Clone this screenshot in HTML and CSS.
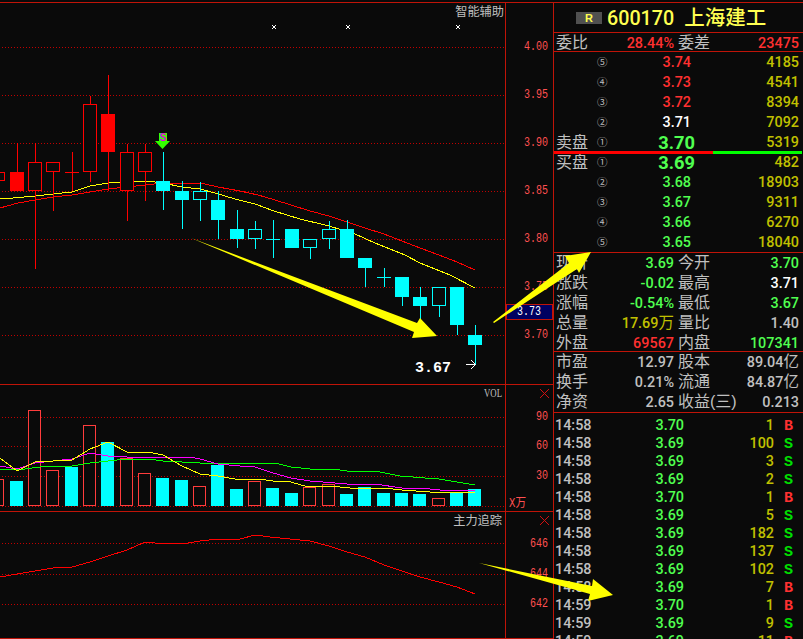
FILE: index.html
```html
<!DOCTYPE html>
<html lang="zh-CN">

<head>
  <meta charset="UTF-8">
  <meta name="viewport" content="width=device-width, initial-scale=1.0">
  <title>600170 上海建工</title>
  <link rel="stylesheet" href="styles.css">
</head>

<body>
  <div class="terminal">
    <div class="charts">
      <svg class="chart" width="553" height="382" viewBox="0 2 553 382">
        <g class="grid">
          <path d="M2 47.5H504M2 95.5H504M2 143.5H504M2 191.5H504M2 239.5H504M2 287.5H504M2 335.5H504" />
        </g>
        <polyline class="line yellow" points="0,199 13,198 35,196 53,194 72,192 90,186 108,183 127,182 145,181 155,182 163,183 182,187 200,189 215,193 235,199 255,204 274,211 300,219 329,226 355,234 375,243 405,255 420,263 450,275 475,288" />
        <polyline class="line red" points="0,208 18,203 35,200 53,197 72,195 90,192 108,189 127,187 145,185 163,183 190,183 205,184 218,187 240,191 258,195 275,200 291,205 310,211 329,216 347,222 365,228 384,234 402,241 420,248 439,255 457,262 475,270" />
        <g id="candles"></g>
        <g class="cross">
          <path d="M272 25L276 29M276 25L272 29M346 25L350 29M350 25L346 29M456 25L460 29M460 25L456 29" />
        </g>
        <rect x="159" y="133" width="8" height="8" fill="#33ff00" />
        <text class="signal" x="163" y="141">S</text>
        <path d="M155 141H170L162.5 149Z" fill="#33ff00" />
        <text class="title" x="504" y="16">智能辅助</text>
        <text class="low" x="415" y="372" textLength="36">3.67</text>
        <path class="pointer" d="M466 364.5H475M471 360L475.5 364.5L471 369" />
        <path class="frame" d="M0 2.5H553M505.5 2V384" />
        <g class="axis">
          <text x="548" y="50" textLength="24" lengthAdjust="spacingAndGlyphs">4.00</text>
          <text x="548" y="98" textLength="24" lengthAdjust="spacingAndGlyphs">3.95</text>
          <text x="548" y="146" textLength="24" lengthAdjust="spacingAndGlyphs">3.90</text>
          <text x="548" y="194" textLength="24" lengthAdjust="spacingAndGlyphs">3.85</text>
          <text x="548" y="242" textLength="24" lengthAdjust="spacingAndGlyphs">3.80</text>
          <text x="548" y="290" textLength="24" lengthAdjust="spacingAndGlyphs">3.75</text>
          <text x="548" y="338" textLength="24" lengthAdjust="spacingAndGlyphs">3.70</text>
        </g>
        <rect class="cursor-box" x="506.5" y="304.5" width="46" height="15" />
        <text class="cursor-price" x="517" y="315" textLength="24" lengthAdjust="spacingAndGlyphs">3.73</text>
      </svg>

      <svg class="chart" width="553" height="127" viewBox="0 384 553 127">
        <g class="grid">
          <path d="M2 417.5H504M2 446.5H504M2 476.5H504M2 506.5H504" />
        </g>
        <g id="volumes"></g>
        <polyline class="line green" points="0,469 25,469 40,467 72,466 90,463 108,461 127,459 148,459 163,461 182,462 200,463 275,463 291,467 310,469 333,469 347,471 375,471 400,476 425,478 439,479 457,482 475,485" />
        <polyline class="line magenta" points="0,466 17,469 35,463 53,461 72,459 90,453 108,456 127,457 190,457 200,459 218,464 240,466 255,467 273,473 291,478 310,481 335,483 347,484 375,484 402,488 420,488 440,490 475,490" />
        <polyline class="line yellow" points="0,458 17,471 35,462 53,461 72,460 90,449 108,442 127,452 148,452 163,455 182,466 200,474 218,476 235,479 258,479 273,481 291,482 308,487 330,486 350,488 384,488 402,490 430,492 457,493 475,492" />
        <path class="frame" d="M0 384.5H553M505.5 384V511" />
        <text class="vol" x="502" y="397" textLength="18" lengthAdjust="spacingAndGlyphs">VOL</text>
        <path class="close" d="M540 389L549 398M549 389L540 398" />
        <g class="axis">
          <text x="548" y="420" textLength="12" lengthAdjust="spacingAndGlyphs">90</text>
          <text x="548" y="449" textLength="12" lengthAdjust="spacingAndGlyphs">60</text>
          <text x="548" y="479" textLength="12" lengthAdjust="spacingAndGlyphs">30</text>
          <text x="526" y="507" textLength="17" lengthAdjust="spacingAndGlyphs">X万</text>
        </g>
      </svg>

      <svg class="chart" width="553" height="128" viewBox="0 511 553 128">
        <g class="grid">
          <path d="M2 543.5H504M2 574.5H504M2 604.5H504" />
        </g>
        <polyline class="line red" points="0,577 17,574 35,571 53,568 72,567 90,562 108,556 127,550 145,542 155,543 182,544 200,541 218,539 240,539 255,535 270,537 290,539 310,541 329,546 347,552 365,557 384,565 402,571 420,577 439,582 457,587 475,594" />
        <path class="frame" d="M0 511.5H553M0 638.5H553M505.5 511V639" />
        <text class="title" x="502" y="525">主力追踪</text>
        <path class="close" d="M540 516L549 525M549 516L540 525" />
        <g class="axis">
          <text x="548" y="547" textLength="18" lengthAdjust="spacingAndGlyphs">646</text>
          <text x="548" y="577" textLength="18" lengthAdjust="spacingAndGlyphs">644</text>
          <text x="548" y="607" textLength="18" lengthAdjust="spacingAndGlyphs">642</text>
        </g>
      </svg>
    </div>

    <div class="quote">
      <div class="stock">
        <span class="badge">R</span>
        <span class="code">600170</span>
        <span class="name">上海建工</span>
      </div>
      <div class="info ratio">
        <div class="row"><span>委比</span><b class="up">28.44%</b><span>委差</span><b class="up">23475</b></div>
      </div>

      <div class="book">
        <div class="level"><span></span><i>⑤</i><b class="up">3.74</b><b class="qty">4185</b></div>
        <div class="level"><span></span><i>④</i><b class="up">3.73</b><b class="qty">4541</b></div>
        <div class="level"><span></span><i>③</i><b class="up">3.72</b><b class="qty">8394</b></div>
        <div class="level"><span></span><i>②</i><b class="flat">3.71</b><b class="qty">7092</b></div>
        <div class="level first"><span>卖盘</span><i>①</i><b class="down">3.70</b><b class="qty">5319</b></div>
        <div class="split"></div>
        <div class="level first"><span>买盘</span><i>①</i><b class="down">3.69</b><b class="qty">482</b></div>
        <div class="level"><span></span><i>②</i><b class="down">3.68</b><b class="qty">18903</b></div>
        <div class="level"><span></span><i>③</i><b class="down">3.67</b><b class="qty">9311</b></div>
        <div class="level"><span></span><i>④</i><b class="down">3.66</b><b class="qty">6270</b></div>
        <div class="level"><span></span><i>⑤</i><b class="down">3.65</b><b class="qty">18040</b></div>
      </div>

      <div class="info today">
        <div class="row"><span>现价</span><b class="down">3.69</b><span>今开</span><b class="down">3.70</b></div>
        <div class="row"><span>涨跌</span><b class="down">-0.02</b><span>最高</span><b class="flat">3.71</b></div>
        <div class="row"><span>涨幅</span><b class="down">-0.54%</b><span>最低</span><b class="down">3.67</b></div>
        <div class="row"><span>总量</span><b class="qty">17.69<em>万</em></b><span>量比</span><b>1.40</b></div>
        <div class="row"><span>外盘</span><b class="up">69567</b><span>内盘</span><b class="down">107341</b></div>
      </div>

      <div class="info basics">
        <div class="row"><span>市盈</span><b>12.97</b><span>股本</span><b>89.04<em>亿</em></b></div>
        <div class="row"><span>换手</span><b>0.21%</b><span>流通</span><b>84.87<em>亿</em></b></div>
        <div class="row"><span>净资</span><b>2.65</b><span>收益(三)</span><b>0.213</b></div>
      </div>

      <div class="ticks" id="ticks"></div>
    </div>

    <svg class="arrows" width="803" height="639">
      <polygon points="191,238 417,323 420,318 437,336 412,338 414,332" />
      <polygon points="493,322 569,263 565,256 591,252 579,273 577,269 494,323" />
      <polygon points="479,563 592,586 593,579 613,595 588,601 590,594" />
    </svg>
  </div>

  <script>
    // x, wick top, body top, body bottom, wick bottom, type
    // r/c = hollow red/cyan, R/C = filled
    const candles = [
      [-10, 172, 172, 181, 181, "r"],
      [10, 143, 172, 191, 191, "R"],
      [28, 143, 162, 191, 269, "r"],
      [46, 162, 162, 172, 211, "r"],
      [65, 152, 172, 173, 191, "R"],
      [83, 96, 104, 172, 182, "r"],
      [101, 75, 114, 152, 191, "R"],
      [120, 144, 152, 191, 221, "r"],
      [138, 144, 152, 172, 201, "r"],
      [156, 152, 181, 191, 210, "C"],
      [175, 181, 191, 200, 229, "C"],
      [193, 182, 191, 200, 221, "c"],
      [211, 191, 200, 220, 239, "C"],
      [230, 210, 229, 239, 248, "C"],
      [248, 221, 229, 239, 249, "c"],
      [266, 220, 239, 240, 258, "C"],
      [285, 229, 229, 248, 248, "C"],
      [303, 239, 239, 248, 259, "c"],
      [322, 221, 229, 239, 249, "c"],
      [340, 220, 229, 258, 258, "C"],
      [358, 258, 258, 268, 287, "C"],
      [377, 268, 277, 278, 287, "C"],
      [395, 277, 277, 297, 306, "C"],
      [413, 287, 297, 306, 320, "C"],
      [432, 287, 287, 306, 317, "c"],
      [450, 287, 287, 325, 335, "C"],
      [468, 325, 335, 345, 365, "C"],
    ];

    // top of each volume bar, in the same order as the candles
    const volumes = [
      [479, "r"], [481, "C"], [410, "r"], [470, "r"], [467, "C"], [425, "r"], [442, "C"],
      [458, "r"], [473, "r"], [478, "C"], [480, "C"], [486, "r"], [465, "C"], [489, "C"],
      [481, "r"], [488, "C"], [493, "C"], [487, "r"], [484, "r"], [494, "C"], [487, "C"],
      [493, "C"], [493, "C"], [494, "C"], [498, "r"], [492, "C"], [489, "C"],
    ];

    const ticks = [
      ["14:58", "3.70", 1, "B"],
      ["14:58", "3.69", 100, "S"],
      ["14:58", "3.69", 3, "S"],
      ["14:58", "3.69", 2, "S"],
      ["14:58", "3.70", 1, "B"],
      ["14:58", "3.69", 5, "S"],
      ["14:58", "3.69", 182, "S"],
      ["14:58", "3.69", 137, "S"],
      ["14:58", "3.69", 102, "S"],
      ["14:58", "3.69", 7, "B"],
      ["14:59", "3.70", 1, "B"],
      ["14:59", "3.69", 9, "S"],
      ["14:59", "3.69", 11, "B"],
    ];

    function bar(x, top, width, bottom, type, red) {
      const color = type.toLowerCase() === "r" ? red : "#00ffff";
      if (type === "R" || type === "C") {
        return `<rect x="${x}" y="${top}" width="${width}" height="${bottom - top}" fill="${color}"/>`;
      }
      return `<rect x="${x + 0.5}" y="${top + 0.5}" width="${width - 1}" height="${bottom - top - 1}" fill="#0a0a0a" stroke="${color}"/>`;
    }

    document.getElementById("candles").innerHTML = candles.map(([x, high, top, bottom, low, type]) => {
      const color = type.toLowerCase() === "r" ? "#ff0000" : "#00ffff";
      return `<rect x="${x + 7}" y="${high}" width="1" height="${low - high}" fill="${color}"/>` +
        bar(x, top, x < 0 ? 15 : 14, bottom, type, "#ff0000");
    }).join("");

    document.getElementById("volumes").innerHTML = volumes.map(([top, type], i) => {
      const x = candles[i][0];
      return bar(x, top, x < 0 ? 14 : 13, 506, type, "#ff3c3c");
    }).join("");

    document.getElementById("ticks").innerHTML = ticks.map(([time, price, qty, side]) =>
      `<div class="tick"><b>${time}</b><b class="down">${price}</b><b class="qty">${qty}</b><b class="side ${side === "B" ? "up" : "sell"}">${side}</b></div>`
    ).join("");
  </script>
</body>

</html>
```
FILE: styles.css
```css
body {
  margin: 0;
  background-color: #0a0a0a;
  color: #c0c0c0;
  font-family: "Liberation Sans", "Noto Sans CJK SC", sans-serif;
  overflow: hidden;
}

.terminal {
  position: relative;
  display: flex;
  width: 803px;
  height: 639px;
  overflow: hidden;
}

/* charts */
.charts {
  display: flex;
  flex-direction: column;
  width: 553px;
  padding-top: 2px;
}

.chart {
  display: block;
}

.grid path {
  stroke: #c00000;
  stroke-dasharray: 1 2;
  shape-rendering: crispEdges;
}

.frame {
  fill: none;
  stroke: #c01408;
  shape-rendering: crispEdges;
}

.line {
  fill: none;
  stroke-width: 1;
  shape-rendering: crispEdges;
}

.yellow {
  stroke: #ffff00;
}

.red {
  stroke: #ff0000;
}

.green {
  stroke: #00ff00;
}

.magenta {
  stroke: #ff00ff;
}

.cross path,
.pointer {
  fill: none;
  stroke: #ffffff;
}

.close {
  stroke: #d01010;
}

.title {
  fill: #c0c0c0;
  font-size: 12.2px;
  font-family: "Noto Sans CJK SC", sans-serif;
  text-anchor: end;
}

.vol {
  fill: #c0c0c0;
  font: 12px "Liberation Serif", serif;
  text-anchor: end;
}

.signal {
  fill: #e000e0;
  font: bold 10px "Liberation Sans", sans-serif;
  text-anchor: middle;
}

.low {
  fill: #ffffff;
  font: bold 15px "Liberation Mono", monospace;
}

.axis text {
  fill: #ff5050;
  font: 12px "Liberation Mono", "Noto Sans CJK SC", monospace;
  text-anchor: end;
}

.cursor-box {
  fill: #000060;
  stroke: #c01408;
}

.cursor-price {
  fill: #ffffff;
  font: 12px "Liberation Mono", monospace;
}

/* quote panel */
.quote {
  box-sizing: border-box;
  width: 250px;
  height: 637px;
  margin-top: 2px;
  border-top: 1px solid #c01408;
  border-left: 1px solid #c01408;
  overflow: hidden;
}

.quote b {
  font-family: Roboto, "Noto Sans CJK SC", sans-serif;
  font-size: 14.4px;
  font-weight: 500;
}

.stock {
  display: flex;
  align-items: center;
  height: 29px;
  padding-left: 22px;
  color: #ffff50;
  font-size: 20px;
  white-space: nowrap;
}

.badge {
  width: 26px;
  height: 12px;
  background-color: #505050;
  font-size: 11px;
  font-weight: bold;
  line-height: 12px;
  text-align: center;
}

.code {
  margin-left: 5px;
  padding-top: 2px;
  font-family: Roboto, sans-serif;
  font-size: 19.7px;
  font-weight: 500;
}

.name {
  margin-left: 10px;
  padding-top: 1px;
  font-size: 20.5px;
  font-weight: 500;
  line-height: 24px;
}

.row {
  display: grid;
  grid-template-columns: 32px 86px 60px 1fr;
  align-items: center;
  height: 20px;
  padding: 0 4px 0 2px;
  font-size: 16px;
  line-height: 20px;
  white-space: nowrap;
}

.row b {
  padding-top: 1px;
  line-height: 19px;
  text-align: right;
}

.row span:nth-child(3) {
  padding-left: 4px;
}

.row em {
  font-size: 15.5px;
  font-style: normal;
  font-weight: normal;
  line-height: 18px;
}

.ratio {
  box-sizing: border-box;
  height: 20px;
  border-top: 1px solid #c01408;
  border-bottom: 1px solid #c01408;
}

.ratio .row {
  height: 18px;
}

.book {
  height: 200px;
}

.level {
  display: grid;
  grid-template-columns: 34px 20px 90px 1fr;
  align-items: center;
  height: 20px;
  padding: 0 4px 0 2px;
  font-size: 16px;
  line-height: 20px;
  white-space: nowrap;
}

.level span {
  padding-top: 1px;
  line-height: 19px;
}

.level i {
  height: 20px;
  padding-left: 7px;
  font: 10.5px/20px "Noto Sans CJK SC", sans-serif;
}

.level b {
  padding-top: 2px;
  line-height: 18px;
  text-align: right;
}

.level b:nth-child(3) {
  padding-right: 9px;
}

.level.first b:nth-child(3) {
  padding-right: 5px;
  font-size: 18.3px;
  font-weight: bold;
}

.split {
  position: relative;
  height: 3px;
  margin: -1px 1px -2px 0;
  background: linear-gradient(to right, #ff0000 159px, #00ff00 159px);
}

.today,
.basics,
.ticks {
  padding-top: 1px;
  box-shadow: inset 0 1px #c01408;
  box-sizing: border-box;
}

.today {
  height: 99px;
}

.basics {
  height: 61px;
}

.ticks {
  padding-top: 4px;
}

.tick {
  display: grid;
  grid-template-columns: 60px 69px 90px 1fr;
  height: 18px;
  padding-left: 1px;
  line-height: 20px;
}

.tick .down,
.tick .qty {
  text-align: right;
}

.tick .side {
  padding-left: 10px;
  font-family: "Liberation Mono", monospace;
  font-size: 15px;
  font-weight: bold;
  line-height: 21px;
}

.up {
  color: #ff3030;
}

.down {
  color: #50ff50;
}

.flat {
  color: #ffffff;
}

.qty {
  color: #c0c000;
}

.sell {
  color: #00e000;
}

.arrows {
  position: absolute;
  top: 0;
  left: 0;
  fill: #ffff00;
}
```
